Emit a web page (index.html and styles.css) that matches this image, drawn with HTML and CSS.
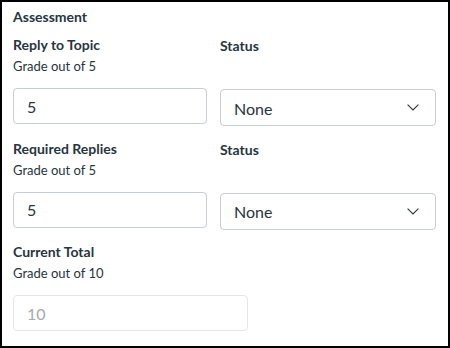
FILE: index.html
```html
<!DOCTYPE html>
<html lang="en">
<head>
<meta charset="utf-8">
<title>Assessment</title>
<link rel="stylesheet" href="styles.css">
</head>
<body>
<div class="frame">
  <h2 class="section-title">Assessment</h2>

  <div class="row">
    <div class="col">
      <div class="field-title">Reply to Topic</div>
      <div class="field-sub">Grade out of 5</div>
      <input class="text-input" type="text" value="5">
    </div>
    <div class="col">
      <div class="status-label">Status</div>
      <div class="select" role="combobox">
        <span>None</span>
        <svg class="chev" width="12" height="7" viewBox="0 0 12 7"><polyline points="0.6,0.6 6,6 11.4,0.6" fill="none" stroke="#273540" stroke-width="1.1"/></svg>
      </div>
    </div>
  </div>

  <div class="row">
    <div class="col">
      <div class="field-title">Required Replies</div>
      <div class="field-sub">Grade out of 5</div>
      <input class="text-input" type="text" value="5">
    </div>
    <div class="col">
      <div class="status-label">Status</div>
      <div class="select" role="combobox">
        <span>None</span>
        <svg class="chev" width="12" height="7" viewBox="0 0 12 7"><polyline points="0.6,0.6 6,6 11.4,0.6" fill="none" stroke="#273540" stroke-width="1.1"/></svg>
      </div>
    </div>
  </div>

  <div class="row single">
    <div class="col">
      <div class="field-title">Current Total</div>
      <div class="field-sub">Grade out of 10</div>
      <input class="text-input total" type="text" value="10" disabled>
    </div>
  </div>
</div>
</body>
</html>
```

FILE: styles.css
```css
html, body {
  margin: 0;
  padding: 0;
  background: #ffffff;
}

.frame {
  box-sizing: border-box;
  width: 450px;
  height: 348px;
  border: 2px solid #000000;
  padding: 7px 12px 0 11px;
  font-family: Lato, "Noto Sans", sans-serif;
  color: #273540;
}

.section-title {
  margin: 0;
  font-size: 14px;
  line-height: 16px;
  font-weight: 700;
}

.row {
  display: grid;
  grid-template-columns: 194px 216px;
  column-gap: 13px;
  align-items: start;
  margin-top: 12.5px;
}

.section-title + .row {
  margin-top: 10px;
}

.row.single {
  grid-template-columns: 235px;
}

.col {
  display: flex;
  flex-direction: column;
}

.field-title {
  font-size: 14px;
  line-height: 20px;
  font-weight: 700;
}

.field-sub {
  margin-top: 3px;
  font-size: 13px;
  line-height: 16px;
}

.text-input {
  box-sizing: border-box;
  margin: 14px 0 0 0;
  height: 36px;
  width: 100%;
  border: 1px solid #c7cdd1;
  border-radius: 4px;
  padding: 0 13px;
  font-family: Lato, "Noto Sans", sans-serif;
  font-size: 16px;
  color: #273540;
  background: #ffffff;
  outline: none;
}

.text-input.total {
  border-color: #e4e7e9;
  color: #a5abaf;
  -webkit-text-fill-color: #a5abaf;
}

.status-label {
  padding-top: 1px;
  font-size: 14px;
  line-height: 20px;
  font-weight: 700;
}

.select {
  box-sizing: border-box;
  margin-top: 33px;
  height: 37px;
  border: 1px solid #c7cdd1;
  border-radius: 4px;
  padding: 0 16px 0 13px;
  display: flex;
  align-items: center;
  justify-content: space-between;
  font-size: 16px;
}

.select span {
  padding-top: 1px;
}

.chev {
  display: block;
}
```
